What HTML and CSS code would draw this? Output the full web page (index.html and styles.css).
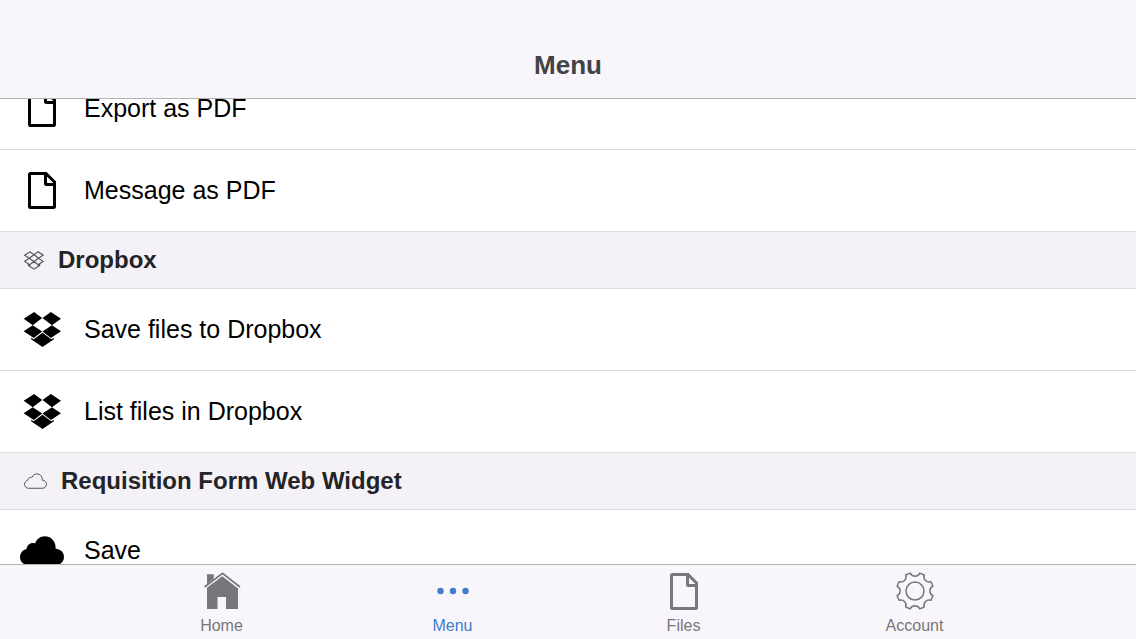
FILE: index.html
```html
<!DOCTYPE html>
<html lang="en">
<head>
  <meta charset="UTF-8" />
  <meta name="viewport" content="width=device-width, initial-scale=1" />
  <title>Menu</title>
  <link rel="stylesheet" href="styles.css">
</head>
<body>

  <!-- Shared icons -->
  <svg class="defs" aria-hidden="true">
    <symbol id="doc" viewBox="0 0 28 37">
      <path d="M2.5 1.5H18L26.5 10V34.5Q26.5 35.5 25.5 35.5H2.5Q1.5 35.5 1.5 34.5V2.5Q1.5 1.5 2.5 1.5ZM17.5 2V11.5Q17.5 12.5 18.5 12.5H26" />
    </symbol>
    <symbol id="dropbox" viewBox="68 242 116 108">
      <path d="M101 244L125 262L97 283L70 264ZM151 244L126 262L154 283L181 264ZM97 283L125 302L100 321L70 301ZM154 283L126 302L151 321L181 301ZM126 306L152 325L160 321V325L126 348L92 325V321L100 325Z" />
    </symbol>
    <symbol id="dropbox-outline" viewBox="66 240 120 112">
      <path d="M101 244L126 262L97 283L70 264ZM151 244L126 262L154 283L181 264ZM97 283L126 302L100 321L70 301ZM154 283L126 302L151 321L181 301ZM92 317V325L126 348L160 325V317" />
    </symbol>
    <symbol id="cloud" viewBox="-1 -1 46 31">
      <path d="M8 29C3.500 29 0 25.500 0 21.200C0 17 3 13.800 6.500 13C7 9.500 9.500 7 12.800 7C13.800 7 14.400 7.100 15 7.400C16.600 3 20.300 .2 24.800 .2C30.800 .2 35.400 5 35.600 11V12.800C40.300 12.900 44 16.300 44 20.900C44 25.500 40.500 29 36 29Z" />
    </symbol>
  </svg>

  <header class="bar">
    <h1 class="title">Menu</h1>
  </header>

  <main class="content">
    <div class="list">
      <a class="item" href="#export">
        <span class="icon"><svg class="doc"><use href="#doc" /></svg></span>Export as PDF
      </a>
      <a class="item" href="#message">
        <span class="icon"><svg class="doc"><use href="#doc" /></svg></span>Message as PDF
      </a>
      <h2 class="divider"><svg class="small-dropbox"><use href="#dropbox-outline" /></svg>Dropbox</h2>
      <a class="item" href="#save-files">
        <span class="icon"><svg class="dropbox"><use href="#dropbox" /></svg></span>Save files to Dropbox
      </a>
      <a class="item" href="#list-files">
        <span class="icon"><svg class="dropbox"><use href="#dropbox" /></svg></span>List files in Dropbox
      </a>
      <h2 class="divider"><svg class="small-cloud"><use href="#cloud" /></svg>Requisition Form Web Widget</h2>
      <a class="item" href="#save">
        <span class="icon"><svg class="cloud"><use href="#cloud" /></svg></span>Save
      </a>
    </div>
  </main>

  <nav class="tabs">
    <a class="tab" href="#home">
      <svg class="tab-icon" viewBox="0 0 40 40">
        <path fill="currentColor" d="M5 3.500H11.500V12L5 18ZM5 17L20 5L36 17V38H24V26H15.500V38H5Z" />
        <path fill="none" stroke="#f8f6fa" stroke-width="4" d="M2 16.500L20.500 2.500L38 16.500" />
        <path fill="none" stroke="currentColor" stroke-width="1.700" d="M2.500 16L20.500 2.300L38 16" />
        <path fill="currentColor" d="M5 3.500H11.500V8L5 13Z" />
      </svg>
      Home
    </a>
    <a class="tab active" href="#menu">
      <svg class="tab-icon" viewBox="0 0 40 40" fill="currentColor">
        <circle cx="7.500" cy="20" r="3.200" />
        <circle cx="20" cy="20" r="3.200" />
        <circle cx="32.500" cy="20" r="3.200" />
      </svg>
      Menu
    </a>
    <a class="tab" href="#files">
      <span class="tab-icon"><svg class="doc"><use href="#doc" /></svg></span>
      Files
    </a>
    <a class="tab" href="#account">
      <svg class="tab-icon" viewBox="-20 -20 40 40" fill="none" stroke="currentColor" stroke-width="1.500" stroke-linejoin="round">
        <circle r="9" />
        <path d="M4.800 -17.900L9.250 -16A5.300 5.300 0 0 0 16 -9.250L17.900 -4.800A5.300 5.300 0 0 0 17.900 4.800L16 9.250A5.300 5.300 0 0 0 9.250 16L4.800 17.900A5.300 5.300 0 0 0 -4.800 17.900L-9.250 16A5.300 5.300 0 0 0 -16 9.250L-17.900 4.800A5.300 5.300 0 0 0 -17.900 -4.800L-16 -9.250A5.300 5.300 0 0 0 -9.250 -16L-4.800 -17.900A5.300 5.300 0 0 0 4.800 -17.900Z" />
      </svg>
      Account
    </a>
  </nav>

</body>
</html>
```

FILE: styles.css
```css
* {
  box-sizing: border-box;
}
body {
  font-family: "Helvetica Neue", "Liberation Sans", Arial, sans-serif;
  margin: 0;
  height: 100vh;
  display: flex;
  flex-direction: column;
  background: #fff;
  color: #000;
}
a {
  color: inherit;
  text-decoration: none;
}
.defs {
  display: none;
}
.bar {
  flex: none;
  padding: 50px 20px 18px;
  background: #f8f6fa;
  border-bottom: 1px solid #b3b2b5;
}
.title {
  margin: 0;
  font-size: 26px;
  line-height: 30px;
  text-align: center;
  color: #434246;
}
.content {
  flex: 1;
  min-height: 0;
  overflow: hidden;
}
/* list is scrolled a little way down */
.list {
  margin-top: -31px;
}
.item {
  display: flex;
  align-items: center;
  gap: 20px;
  height: 82px;
  padding: 0 20px;
  font-size: 25px;
  border-bottom: 1px solid #dddce0;
}
.icon {
  display: flex;
  justify-content: center;
  width: 44px;
}
.divider {
  display: flex;
  align-items: center;
  gap: 14px;
  height: 57px;
  margin: 0;
  padding: 0 24px;
  font-size: 24px;
  color: #242327;
  background: #f4f2f6;
  border-bottom: 1px solid #dddce0;
}
.doc {
  width: 28px;
  height: 37px;
  fill: none;
  stroke: currentColor;
  stroke-width: 3px;
}
.dropbox {
  width: 39px;
  height: 37px;
}
.cloud {
  flex: none;
  width: 46px;
  height: 31px;
}
.small-dropbox {
  width: 20px;
  height: 19px;
  fill: none;
  stroke: #55545a;
  stroke-width: 7px;
}
.small-cloud {
  width: 23px;
  height: 16px;
  fill: none;
  stroke: #55545a;
  stroke-width: 2px;
}
.tabs {
  flex: none;
  display: flex;
  justify-content: center;
  height: 75px;
  background: #f8f6fa;
  border-top: 1px solid #b3b2b5;
}
.tab {
  flex: 1;
  max-width: 231px;
  display: flex;
  flex-direction: column;
  align-items: center;
  gap: 6px;
  padding-top: 6px;
  font-size: 16px;
  line-height: 18px;
  color: #77767a;
}
.tab.active {
  color: #447bcb;
}
.tab-icon {
  display: flex;
  align-items: center;
  justify-content: center;
  width: 40px;
  height: 40px;
}
```
